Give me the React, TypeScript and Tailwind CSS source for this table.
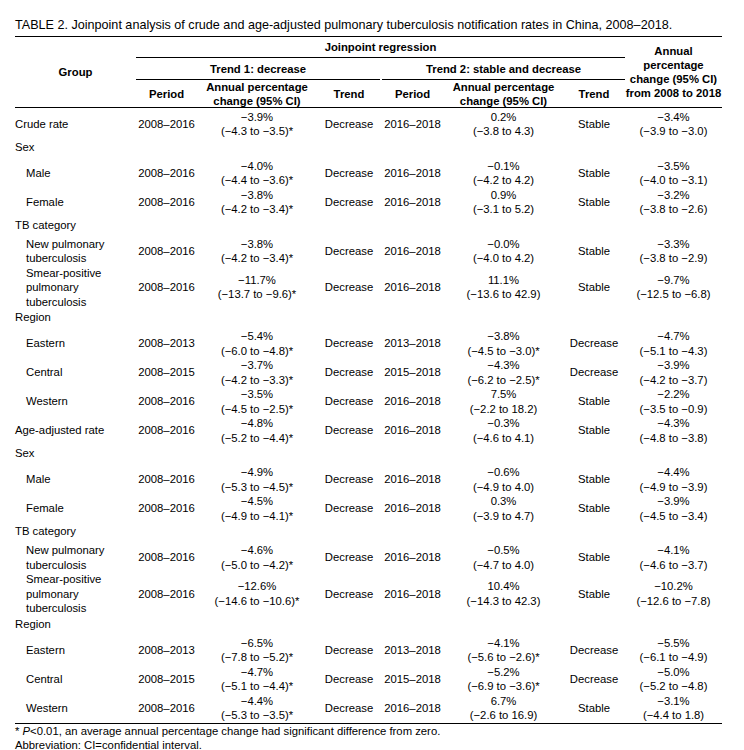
import React from 'react';

type DataRow = {
    kind: 'data';
    label: string[];
    indent?: boolean;
    p1: string;
    apc1: [string, string];
    t1: string;
    p2: string;
    apc2: [string, string];
    t2: string;
    total: [string, string];
};

type SectionRow = { kind: 'section'; label: string };

type Row = DataRow | SectionRow;

const COLS = 'grid grid-cols-[121px_61px_120px_64px_63px_119px_62px_97px]';

const rows: Row[] = [
    { kind: 'data', label: ['Crude rate'], p1: '2008–2016', apc1: ['−3.9%', '(−4.3 to −3.5)*'], t1: 'Decrease', p2: '2016–2018', apc2: ['0.2%', '(−3.8 to 4.3)'], t2: 'Stable', total: ['−3.4%', '(−3.9 to −3.0)'] },
    { kind: 'section', label: 'Sex' },
    { kind: 'data', indent: true, label: ['Male'], p1: '2008–2016', apc1: ['−4.0%', '(−4.4 to −3.6)*'], t1: 'Decrease', p2: '2016–2018', apc2: ['−0.1%', '(−4.2 to 4.2)'], t2: 'Stable', total: ['−3.5%', '(−4.0 to −3.1)'] },
    { kind: 'data', indent: true, label: ['Female'], p1: '2008–2016', apc1: ['−3.8%', '(−4.2 to −3.4)*'], t1: 'Decrease', p2: '2016–2018', apc2: ['0.9%', '(−3.1 to 5.2)'], t2: 'Stable', total: ['−3.2%', '(−3.8 to −2.6)'] },
    { kind: 'section', label: 'TB category' },
    { kind: 'data', indent: true, label: ['New pulmonary', 'tuberculosis'], p1: '2008–2016', apc1: ['−3.8%', '(−4.2 to −3.4)*'], t1: 'Decrease', p2: '2016–2018', apc2: ['−0.0%', '(−4.0 to 4.2)'], t2: 'Stable', total: ['−3.3%', '(−3.8 to −2.9)'] },
    { kind: 'data', indent: true, label: ['Smear-positive', 'pulmonary', 'tuberculosis'], p1: '2008–2016', apc1: ['−11.7%', '(−13.7 to −9.6)*'], t1: 'Decrease', p2: '2016–2018', apc2: ['11.1%', '(−13.6 to 42.9)'], t2: 'Stable', total: ['−9.7%', '(−12.5 to −6.8)'] },
    { kind: 'section', label: 'Region' },
    { kind: 'data', indent: true, label: ['Eastern'], p1: '2008–2013', apc1: ['−5.4%', '(−6.0 to −4.8)*'], t1: 'Decrease', p2: '2013–2018', apc2: ['−3.8%', '(−4.5 to −3.0)*'], t2: 'Decrease', total: ['−4.7%', '(−5.1 to −4.3)'] },
    { kind: 'data', indent: true, label: ['Central'], p1: '2008–2015', apc1: ['−3.7%', '(−4.2 to −3.3)*'], t1: 'Decrease', p2: '2015–2018', apc2: ['−4.3%', '(−6.2 to −2.5)*'], t2: 'Decrease', total: ['−3.9%', '(−4.2 to −3.7)'] },
    { kind: 'data', indent: true, label: ['Western'], p1: '2008–2016', apc1: ['−3.5%', '(−4.5 to −2.5)*'], t1: 'Decrease', p2: '2016–2018', apc2: ['7.5%', '(−2.2 to 18.2)'], t2: 'Stable', total: ['−2.2%', '(−3.5 to −0.9)'] },
    { kind: 'data', label: ['Age-adjusted rate'], p1: '2008–2016', apc1: ['−4.8%', '(−5.2 to −4.4)*'], t1: 'Decrease', p2: '2016–2018', apc2: ['−0.3%', '(−4.6 to 4.1)'], t2: 'Stable', total: ['−4.3%', '(−4.8 to −3.8)'] },
    { kind: 'section', label: 'Sex' },
    { kind: 'data', indent: true, label: ['Male'], p1: '2008–2016', apc1: ['−4.9%', '(−5.3 to −4.5)*'], t1: 'Decrease', p2: '2016–2018', apc2: ['−0.6%', '(−4.9 to 4.0)'], t2: 'Stable', total: ['−4.4%', '(−4.9 to −3.9)'] },
    { kind: 'data', indent: true, label: ['Female'], p1: '2008–2016', apc1: ['−4.5%', '(−4.9 to −4.1)*'], t1: 'Decrease', p2: '2016–2018', apc2: ['0.3%', '(−3.9 to 4.7)'], t2: 'Stable', total: ['−3.9%', '(−4.5 to −3.4)'] },
    { kind: 'section', label: 'TB category' },
    { kind: 'data', indent: true, label: ['New pulmonary', 'tuberculosis'], p1: '2008–2016', apc1: ['−4.6%', '(−5.0 to −4.2)*'], t1: 'Decrease', p2: '2016–2018', apc2: ['−0.5%', '(−4.7 to 4.0)'], t2: 'Stable', total: ['−4.1%', '(−4.6 to −3.7)'] },
    { kind: 'data', indent: true, label: ['Smear-positive', 'pulmonary', 'tuberculosis'], p1: '2008–2016', apc1: ['−12.6%', '(−14.6 to −10.6)*'], t1: 'Decrease', p2: '2016–2018', apc2: ['10.4%', '(−14.3 to 42.3)'], t2: 'Stable', total: ['−10.2%', '(−12.6 to −7.8)'] },
    { kind: 'section', label: 'Region' },
    { kind: 'data', indent: true, label: ['Eastern'], p1: '2008–2013', apc1: ['−6.5%', '(−7.8 to −5.2)*'], t1: 'Decrease', p2: '2013–2018', apc2: ['−4.1%', '(−5.6 to −2.6)*'], t2: 'Decrease', total: ['−5.5%', '(−6.1 to −4.9)'] },
    { kind: 'data', indent: true, label: ['Central'], p1: '2008–2015', apc1: ['−4.7%', '(−5.1 to −4.4)*'], t1: 'Decrease', p2: '2015–2018', apc2: ['−5.2%', '(−6.9 to −3.6)*'], t2: 'Decrease', total: ['−5.0%', '(−5.2 to −4.8)'] },
    { kind: 'data', indent: true, label: ['Western'], p1: '2008–2016', apc1: ['−4.4%', '(−5.3 to −3.5)*'], t1: 'Decrease', p2: '2016–2018', apc2: ['6.7%', '(−2.6 to 16.9)'], t2: 'Stable', total: ['−3.1%', '(−4.4 to 1.8)'] },
];

function Cell({ lines }: { lines: string[] }) {
    return (
        <div className="flex flex-col items-center justify-center text-center whitespace-nowrap">
            {lines.map((l, i) => (
                <span key={i}>{l}</span>
            ))}
        </div>
    );
}

function BodyRow({ row }: { row: Row }) {
    if (row.kind === 'section') {
        return (
            <div className={`${COLS} h-[20px]`}>
                <div className="pt-[1px]">{row.label}</div>
            </div>
        );
    }
    // smear-positive rows take three lines, the rest two
    const h = row.label.length === 3 ? 'h-[43.5px]' : 'h-[29px]';
    return (
        <div className={`${COLS} ${h}`}>
            <div className={`flex flex-col justify-center ${row.indent ? 'pl-[11px]' : ''}`}>
                {row.label.map((l, i) => (
                    <span key={i}>{l}</span>
                ))}
            </div>
            <Cell lines={[row.p1]} />
            <Cell lines={row.apc1} />
            <Cell lines={[row.t1]} />
            <Cell lines={[row.p2]} />
            <Cell lines={row.apc2} />
            <Cell lines={[row.t2]} />
            <Cell lines={row.total} />
        </div>
    );
}

export default function App() {
    return (
        <div className="min-h-[750px] w-[744px] bg-white text-black font-['Liberation_Sans',Arial,sans-serif]">
            <div className="pl-[15px] pt-[17px] text-[12.6px] leading-[16px] whitespace-nowrap">
                TABLE 2. Joinpoint analysis of crude and age-adjusted pulmonary tuberculosis notification rates in China, 2008–2018.
            </div>

            <div className="ml-[15px] mt-[3px] w-[707px] text-[11.3px] leading-[14.5px]">
                {/* Header */}
                <div className={`${COLS} grid-rows-[21px_22px_27px] border-t border-b border-black font-bold leading-[14px]`}>
                    <div className="row-span-3 flex items-center justify-center">Group</div>
                    <div className="col-span-6 flex items-center justify-center border-b border-black">
                        Joinpoint regression
                    </div>
                    <div className="col-start-8 row-span-3 row-start-1 flex flex-col items-center justify-center text-center">
                        <span>Annual</span>
                        <span>percentage</span>
                        <span>change (95% CI)</span>
                        <span className="whitespace-nowrap">from 2008 to 2018</span>
                    </div>
                    <div className="col-span-3 col-start-2 row-start-2 mr-[1px] flex items-center justify-center border-b border-black">
                        Trend 1: decrease
                    </div>
                    <div className="col-span-3 col-start-5 row-start-2 ml-[1px] flex items-center justify-center border-b border-black">
                        Trend 2: stable and decrease
                    </div>
                    <div className="col-start-2 row-start-3 flex items-center justify-center">Period</div>
                    <div className="col-start-3 row-start-3 flex flex-col items-center justify-center text-center">
                        <span>Annual percentage</span>
                        <span>change (95% CI)</span>
                    </div>
                    <div className="col-start-4 row-start-3 flex items-center justify-center">Trend</div>
                    <div className="col-start-5 row-start-3 flex items-center justify-center">Period</div>
                    <div className="col-start-6 row-start-3 flex flex-col items-center justify-center text-center">
                        <span>Annual percentage</span>
                        <span>change (95% CI)</span>
                    </div>
                    <div className="col-start-7 row-start-3 flex items-center justify-center">Trend</div>
                </div>

                {/* Body */}
                <div className="border-b border-black pt-[1.5px]">
                    {rows.map((r, i) => (
                        <BodyRow key={i} row={r} />
                    ))}
                </div>

                {/* Footnotes */}
                <div className="leading-[14px]">
                    <div>
                        * <i>P</i>&lt;0.01, an average annual percentage change had significant difference from zero.
                    </div>
                    <div>Abbreviation: CI=confidential interval.</div>
                </div>
            </div>
        </div>
    );
}
